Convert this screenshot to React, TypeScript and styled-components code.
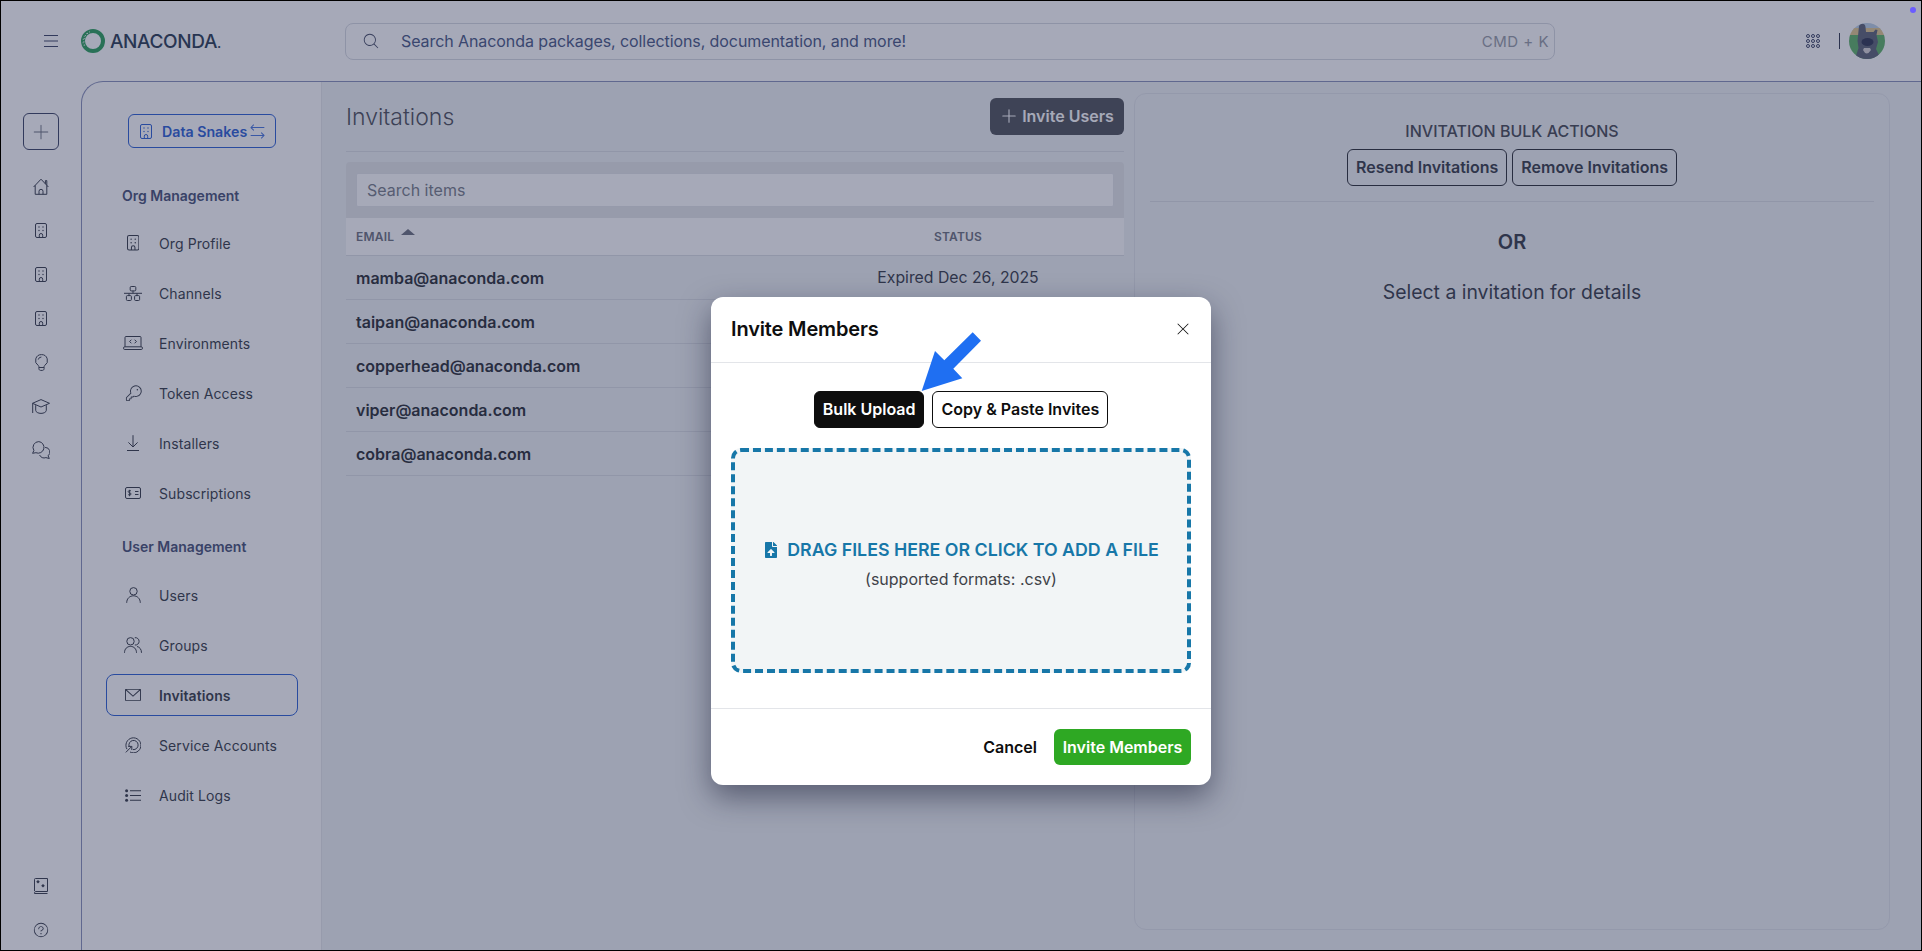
import styled, { createGlobalStyle } from "styled-components";
import { FaFileUpload } from "react-icons/fa";
import {
  PiArrowsLeftRightLight,
  PiEnvelopeSimpleLight,
  PiKeyLight,
  PiMagnifyingGlassLight,
  PiPlus,
  PiPlusLight,
  PiQuestionLight,
  PiXLight,
} from "react-icons/pi";

const Building = ({ size = 16 }: { size?: number }) => (
  <svg width={size * 0.8} height={size} viewBox="0 0 12 15" fill="none" stroke="currentColor" strokeWidth="1">
    <rect x="0.5" y="0.5" width="11" height="14" rx="1.5" />
    <path d="M4.3 14.5v-2.3a1.7 1.7 0 0 1 3.4 0v2.3" />
    <g fill="currentColor" stroke="none">
      <circle cx="4" cy="4" r=".7" />
      <circle cx="8" cy="4" r=".7" />
      <circle cx="4" cy="7.5" r=".7" />
      <circle cx="8" cy="7.5" r=".7" />
    </g>
  </svg>
);

const Home = () => (
  <svg width="16" height="17" viewBox="0 0 16 17" fill="none" stroke="currentColor" strokeWidth="1">
    <path d="M.6 9 8 1.2 15.4 9M2.2 7.4v8.9h11.6V7.4M6 16.300v-3a2 2 0 0 1 4 0v3M12.400 5.800V2.600h1.400v4.600" />
  </svg>
);

const Bulb = () => (
  <svg width="13" height="17" viewBox="0 0 13 17" fill="none" stroke="currentColor" strokeWidth="1">
    <path d="M6.500.6a5.900 5.900 0 0 0-3.200 10.900c.4.300.6.700.6 1.100v.9h5.200v-.9c0-.4.2-.8.6-1.100A5.900 5.900 0 0 0 6.500.6z" />
    <path d="M3.900 13.500v1.200c0 .9.700 1.700 1.700 1.700h1.800c1 0 1.700-.8 1.700-1.700v-1.200M6.400 3a3.400 3.400 0 0 0-3.200 2.600" />
  </svg>
);

const GradCap = () => (
  <svg width="18" height="15" viewBox="0 0 18 15" fill="none" stroke="currentColor" strokeWidth="1">
    <path d="M.5 4.300 9 .6l8.500 3.700L9 8z" />
    <path d="M3.700 6.200v5.200c0 1.600 2.500 3 5.300 3s5.300-1.400 5.300-3V6.200M.7 4.300V14" />
  </svg>
);

const Chats = () => (
  <svg width="18" height="18" viewBox="0 0 18 18" fill="none" stroke="currentColor" strokeWidth="1">
    <path d="M6.800.6a5.800 5.800 0 0 0-4.900 8.900L.6 12.300l3.300-.6A5.800 5.800 0 1 0 6.800.6z" />
    <path d="M13.100 6.400a4.700 4.700 0 0 1 3 8.400l1.200 2.700-3.400-.9a4.800 4.800 0 0 1-6.300-2.600" />
  </svg>
);

const Channels = () => (
  <svg width="18" height="15" viewBox="0 0 18 15" fill="none" stroke="currentColor" strokeWidth="1">
    <rect x="6.200" y=".5" width="5.600" height="4.400" rx="1" />
    <path d="M0 7.300h18M9 4.900v2.400M5 7.300v2.300M13 7.300v2.300" />
    <rect x="2.400" y="9.600" width="5" height="4.900" rx="1" />
    <rect x="10.600" y="9.600" width="5" height="4.900" rx="1" />
  </svg>
);

const Laptop = () => (
  <svg width="20" height="14" viewBox="0 0 20 14" fill="none" stroke="currentColor" strokeWidth="1">
    <path d="M2 10.800V1.500a1 1 0 0 1 1-1h14a1 1 0 0 1 1 1v9.300" />
    <rect x=".5" y="10.800" width="19" height="2.700" rx="1.300" />
    <path d="M8.400 3.700 6.600 5.500l1.800 1.800M11.600 3.700l1.800 1.800-1.800 1.800" />
  </svg>
);

const DownloadLine = () => (
  <svg width="12" height="16" viewBox="0 0 12 16" fill="none" stroke="currentColor" strokeWidth="1">
    <path d="M6 .2v11.600M1.400 7.400 6 12l4.600-4.600M0 15.500h12" />
  </svg>
);

const Bill = () => (
  <svg width="16" height="12" viewBox="0 0 16 12" fill="none" stroke="currentColor" strokeWidth="1">
    <rect x=".5" y=".5" width="15" height="11" rx="1.500" />
    <path d="M10 4.500h3.500M10 7.500h3.500M6 4c-.3-.6-2.800-.8-2.800.6 0 1.500 2.900.9 2.900 2.400 0 1.300-2.600 1.200-3 .4M4.600 2.800v6.400" />
  </svg>
);

const Person = () => (
  <svg width="15" height="16" viewBox="0 0 15 16" fill="none" stroke="currentColor" strokeWidth="1">
    <circle cx="7.500" cy="4.300" r="3.700" />
    <path d="M.7 15.800c0-4.200 3-7 6.800-7s6.800 2.800 6.800 7" />
  </svg>
);

const People = () => (
  <svg width="18" height="16" viewBox="0 0 18 16" fill="none" stroke="currentColor" strokeWidth="1">
    <circle cx="6.500" cy="4.300" r="3.700" />
    <path d="M10.800.7a3.700 3.700 0 1 1 0 7.300M.5 15.800c0-3.900 2.500-6.400 6-6.400s6 2.500 6 6.400M13 9.500c2.700.5 4.500 2.900 4.500 6.300" />
  </svg>
);

const ServiceMark = () => (
  <svg width="16" height="16" viewBox="0 0 16 16" fill="none" stroke="currentColor" strokeWidth="1">
    <path d="M2 12.200A7.500 7.500 0 1 1 5 15" />
    <path d="M4.200 9.600A4.600 4.600 0 1 1 8 12.600" />
    <path d="M.8 15.400 6.600 9.600M6.800 13V9.400H3.200" />
  </svg>
);

const AuditList = () => (
  <svg width="16" height="13" viewBox="0 0 16 13" fill="none" stroke="currentColor" strokeWidth="1.100">
    <path d="M5 1.700h11M5 6.500h11M5 11.300h11" />
    <g fill="currentColor" stroke="none">
      <circle cx="1.600" cy="1.700" r="1.500" />
      <circle cx="1.600" cy="6.500" r="1.500" />
      <circle cx="1.600" cy="11.300" r="1.500" />
    </g>
  </svg>
);

const GuideBook = () => (
  <svg width="14" height="16" viewBox="0 0 14 16" fill="none" stroke="currentColor" strokeWidth="1">
    <path d="M.5 13V1.500a1 1 0 0 1 1-1h12v13H1.800a1.300 1.300 0 0 0-1.300 1.200v.8h13" />
    <path fill="currentColor" stroke="none" d="m4 2 1.800 1.800L4 5.600 2.200 3.800zM9 6l1.800 1.800L9 9.600 7.200 7.800z" />
  </svg>
);

const AppGrid = () => (
  <svg width="14" height="14" viewBox="0 0 14 14" fill="none" stroke="currentColor" strokeWidth="1">
    {[2, 7, 12].map((y) =>
      [2, 7, 12].map((x) => <circle key={`${x}-${y}`} cx={x} cy={y} r="1.500" />)
    )}
  </svg>
);

const LogoRing = () => (
  <svg width="24" height="24" viewBox="0 0 24 24" fill="none">
    <circle cx="12" cy="12" r="10" stroke="#2fa25e" strokeWidth="4" />
    <path d="M7 4C2.500 7 2 13 4 17.500" stroke="#fff" strokeWidth="1" strokeDasharray="1.200 2" />
    <path d="M9 2.800C3.500 4 .5 11 2.800 17" stroke="#fff" strokeWidth=".8" strokeDasharray="1 2.400" />
  </svg>
);

const DogAvatar = () => (
  <svg width="36" height="36" viewBox="0 0 36 36">
    <defs>
      <clipPath id="avatarClip">
        <circle cx="18" cy="18" r="18" />
      </clipPath>
    </defs>
    <g clipPath="url(#avatarClip)">
      <rect width="36" height="8" fill="#bcd2e6" />
      <rect y="5" width="36" height="8" fill="#e2c98f" />
      <rect y="12" width="36" height="24" fill="#62b46a" />
      <path d="M10 3c2-3 6-3 6.500 1l.5 5h7.500l2-2.500 2 .5-1 5 1.500 7-2 7 5 10H6l3.500-11-1-7z" fill="#5f6679" />
      <ellipse cx="18.500" cy="19" rx="6" ry="4" fill="#323a55" />
      <path d="M14 27q3.500 7 8 0l-1-2h-6z" fill="#d9d6d8" />
    </g>
  </svg>
);

const orgItems = [
  { label: "Org Profile", icon: <Building size={15.5} /> },
  { label: "Channels", icon: <Channels /> },
  { label: "Environments", icon: <Laptop /> },
  { label: "Token Access", icon: <PiKeyLight size={19} /> },
  { label: "Installers", icon: <DownloadLine /> },
  { label: "Subscriptions", icon: <Bill /> },
];

const userItems = [
  { label: "Users", icon: <Person /> },
  { label: "Groups", icon: <People /> },
  { label: "Invitations", icon: <PiEnvelopeSimpleLight size={20} />, active: true },
  { label: "Service Accounts", icon: <ServiceMark /> },
  { label: "Audit Logs", icon: <AuditList /> },
];

// only the first row's status shows, the dialog sits over the others
const rows = [
  { email: "mamba@anaconda.com", status: "Expired Dec 26, 2025" },
  { email: "taipan@anaconda.com", status: "" },
  { email: "copperhead@anaconda.com", status: "" },
  { email: "viper@anaconda.com", status: "" },
  { email: "cobra@anaconda.com", status: "" },
];

function App() {
  return (
    <Page>
      <GlobalStyle />
      <TopBar>
        <Burger>
          <svg width="14" height="12" viewBox="0 0 14 12" stroke="currentColor" strokeWidth="1">
            <path d="M0 .5h14M0 6h14M0 11.500h14" />
          </svg>
        </Burger>
        <Logo>
          <LogoRing />
          <LogoText>ANACONDA<small>.</small></LogoText>
        </Logo>
        <SearchBar>
          <PiMagnifyingGlassLight size={18} />
          <SearchText>Search Anaconda packages, collections, documentation, and more!</SearchText>
          <Shortcut>CMD + K</Shortcut>
        </SearchBar>
        <UserTools>
          <AppGrid />
          <ToolDivider />
          <DogAvatar />
        </UserTools>
      </TopBar>

      <Body>
        <Rail>
          <AddButton>
            <PiPlusLight size={20} />
          </AddButton>
          <RailStack>
            <RailIcon><Home /></RailIcon>
            <RailIcon><Building size={15} /></RailIcon>
            <RailIcon><Building size={15} /></RailIcon>
            <RailIcon><Building size={15} /></RailIcon>
            <RailIcon><Bulb /></RailIcon>
            <RailIcon><GradCap /></RailIcon>
            <RailIcon><Chats /></RailIcon>
          </RailStack>
          <RailFooter>
            <RailIcon><GuideBook /></RailIcon>
            <RailIcon><PiQuestionLight size={18} /></RailIcon>
          </RailFooter>
        </Rail>

        <Panel>
          <Sidebar>
            <OrgSwitch>
              <Building size={15} />
              <span>Data Snakes</span>
              <PiArrowsLeftRightLight size={21} />
            </OrgSwitch>
            <SectionLabel>Org Management</SectionLabel>
            <NavList>
              {orgItems.map((item) => (
                <NavItem key={item.label}>
                  <NavIcon>{item.icon}</NavIcon>
                  {item.label}
                </NavItem>
              ))}
            </NavList>
            <SectionLabel $spaced>User Management</SectionLabel>
            <NavList>
              {userItems.map((item) => (
                <NavItem key={item.label} $active={item.active}>
                  <NavIcon>{item.icon}</NavIcon>
                  {item.label}
                </NavItem>
              ))}
            </NavList>
          </Sidebar>

          <Content>
            <ListColumn>
              <ListHeader>
                <PageTitle>Invitations</PageTitle>
                <InviteUsers>
                  <PiPlus size={18} />
                  Invite Users
                </InviteUsers>
              </ListHeader>
              <SearchStrip>
                <ItemsSearch>Search items</ItemsSearch>
              </SearchStrip>
              <TableHead>
                <HeadCell>
                  EMAIL <SortArrow />
                </HeadCell>
                <HeadCell $center>STATUS</HeadCell>
              </TableHead>
              {rows.map((row) => (
                <TableRow key={row.email}>
                  <EmailCell>{row.email}</EmailCell>
                  <StatusCell>{row.status}</StatusCell>
                </TableRow>
              ))}
            </ListColumn>

            <DetailPanel>
              <BulkTitle>INVITATION BULK ACTIONS</BulkTitle>
              <BulkButtons>
                <OutlineButton>Resend Invitations</OutlineButton>
                <OutlineButton>Remove Invitations</OutlineButton>
              </BulkButtons>
              <DetailDivider />
              <OrText>OR</OrText>
              <SelectHint>Select a invitation for details</SelectHint>
            </DetailPanel>
          </Content>
        </Panel>
      </Body>

      <Backdrop>
        <Modal>
          <ModalHeader>
            <ModalTitle>Invite Members</ModalTitle>
            <PiXLight size={18} />
          </ModalHeader>
          <ModalBody>
            <Tabs>
              <Tab $selected>Bulk Upload</Tab>
              <Tab>Copy &amp; Paste Invites</Tab>
            </Tabs>
            <DropZone>
              <DropTitle>
                <FaFileUpload size={16} />
                DRAG FILES HERE OR CLICK TO ADD A FILE
              </DropTitle>
              <DropHint>(supported formats: .csv)</DropHint>
            </DropZone>
          </ModalBody>
          <ModalFooter>
            <CancelButton>Cancel</CancelButton>
            <SubmitButton>Invite Members</SubmitButton>
          </ModalFooter>
          <CalloutArrow width="61" height="60" viewBox="0 0 61 60">
            <polygon points=".7,59 14,19 23.3,28.3 51.7,.3 60,8.700 32.3,36.700 41.3,46.300" fill="#1f6ff2" />
          </CalloutArrow>
        </Modal>
      </Backdrop>
      <StatusDot />
    </Page>
  );
}

const GlobalStyle = createGlobalStyle`
  html, body {
    margin: 0;
    height: 100%;
    overflow: hidden;
    background: #fff;
  }
  * {
    box-sizing: border-box;
  }
  body {
    font-family: Inter, "Liberation Sans", sans-serif;
    color: #3a3f4a;
  }
`;

const Page = styled.div`
  position: relative;
  height: 100vh;
  display: flex;
  flex-direction: column;
  border: 1px solid #000;
  overflow: hidden;
`;

const TopBar = styled.header`
  height: 80px;
  flex: none;
  display: flex;
  align-items: center;
  padding: 0 36px 0 38px;
  color: #3f4766;
`;

const Burger = styled.div`
  width: 24px;
  display: flex;
  justify-content: center;
`;

const Logo = styled.div`
  width: 264px;
  margin-left: 18px;
  flex: none;
  display: flex;
  align-items: center;
  gap: 5px;
`;

const LogoText = styled.span`
  font-size: 19px;
  font-weight: 500;
  letter-spacing: -0.37px;
  color: #2e3f55;

  small {
    font-size: 14px;
  }
`;

const SearchBar = styled.div`
  width: 1210px;
  height: 37px;
  flex: none;
  display: flex;
  align-items: center;
  padding: 0 5px 0 16px;
  border: 1px solid #d8dbe2;
  border-radius: 8px;
  color: #4a5068;
`;

const SearchText = styled.span`
  margin-left: 21px;
  font-size: 16px;
  letter-spacing: -0.08px;
  color: #4b5a86;
`;

const Shortcut = styled.span`
  margin-left: auto;
  font-size: 15px;
  letter-spacing: 0.5px;
  color: #9a9ea8;
`;

const UserTools = styled.div`
  margin-left: auto;
  display: flex;
  align-items: center;
  color: #3f4766;
`;

const ToolDivider = styled.div`
  width: 1px;
  height: 16px;
  margin: 0 9px 0 19px;
  background: #33394f;
`;

const Body = styled.div`
  flex: 1;
  min-height: 0;
  display: flex;
`;

const Rail = styled.nav`
  width: 80px;
  flex: none;
  display: flex;
  flex-direction: column;
  align-items: center;
  padding: 32px 0 8px;
  color: #3b404e;
`;

const AddButton = styled.div`
  width: 36px;
  height: 37px;
  display: flex;
  align-items: center;
  justify-content: center;
  border: 1px solid #3f4766;
  border-radius: 6px;
  color: #6d7180;
`;

const RailStack = styled.div`
  margin-top: 24px;
  display: flex;
  flex-direction: column;
  gap: 20px;
`;

const RailFooter = styled(RailStack)`
  margin-top: auto;
`;

const RailIcon = styled.div`
  width: 24px;
  height: 24px;
  display: flex;
  align-items: center;
  justify-content: center;
`;

const Panel = styled.main`
  flex: 1;
  min-width: 0;
  display: flex;
  border-top: 1px solid #8b93bb;
  border-left: 1px solid #8b93bb;
  border-top-left-radius: 22px;
  overflow: hidden;
`;

const Sidebar = styled.aside`
  width: 240px;
  flex: none;
  display: flex;
  flex-direction: column;
  padding: 32px 23px 0 24px;
  border-right: 1px solid #e6e8ec;
`;

const OrgSwitch = styled.button`
  align-self: center;
  width: 148px;
  height: 34px;
  display: flex;
  align-items: center;
  padding: 0 0 0 11px;
  border: 1px solid #2f63d6;
  border-radius: 6px;
  background: transparent;
  font: 600 14.2px Inter, sans-serif;
  color: #2f63d6;

  span {
    margin: 0 0 0 10px;
  }

  svg:last-child {
    color: #4a78e0;
  }
`;

const SectionLabel = styled.div<{ $spaced?: boolean }>`
  margin: ${(props) => (props.$spaced ? "23px 0 17px 16px" : "38px 0 16px 16px")};
  font-size: 14px;
  font-weight: 600;
  line-height: 20px;
  color: #4a5478;
`;

const NavList = styled.ul`
  margin: 0;
  padding: 0;
  list-style: none;
  display: flex;
  flex-direction: column;
  gap: 8px;
`;

const NavItem = styled.li<{ $active?: boolean }>`
  height: 42px;
  display: flex;
  align-items: center;
  gap: 14px;
  padding-left: 14px;
  border: 1px solid ${(props) => (props.$active ? "#2f63d6" : "transparent")};
  border-radius: 8px;
  font-size: 14px;
  font-weight: ${(props) => (props.$active ? 600 : 400)};
  letter-spacing: 0.1px;
  color: #3a3f4a;
`;

const NavIcon = styled.span`
  width: 24px;
  display: flex;
  justify-content: center;
`;

const Content = styled.section`
  flex: 1;
  min-width: 0;
  display: flex;
  gap: 10px;
  padding: 11px 31px 20px 24px;
  background: #f0f3f5;
`;

const ListColumn = styled.div`
  width: 778px;
  flex: none;
  padding-top: 5px;
`;

const ListHeader = styled.div`
  height: 54px;
  display: flex;
  align-items: flex-start;
  justify-content: space-between;
  border-bottom: 1px solid #dde0e5;
`;

const PageTitle = styled.h1`
  margin: 0;
  font-size: 23px;
  font-weight: 300;
  line-height: 39px;
  color: #50535c;
`;

const InviteUsers = styled.button`
  height: 37px;
  width: 134px;
  display: flex;
  align-items: center;
  justify-content: center;
  gap: 4px;
  padding: 0 0 1px;
  border: 0;
  border-radius: 6px;
  background: #53555c;
  font: 600 16px Inter, sans-serif;
  color: #fff;
`;

const SearchStrip = styled.div`
  margin-top: 10px;
  padding: 11px 10px;
  background: #e6e8ea;
  border-radius: 4px 4px 0 0;
`;

const ItemsSearch = styled.div`
  height: 34px;
  display: flex;
  align-items: center;
  padding-left: 10px;
  border: 1px solid #e4e6ea;
  border-radius: 2px;
  background: #fff;
  font-size: 16px;
  color: #7b7f8a;
`;

const TableHead = styled.div`
  height: 38px;
  display: grid;
  grid-template-columns: 1fr 332px;
  align-items: center;
  padding-left: 10px;
  background: #fff;
  border-bottom: 1px solid #dde0e5;
`;

const HeadCell = styled.div<{ $center?: boolean }>`
  display: flex;
  align-items: center;
  justify-content: ${(props) => (props.$center ? "center" : "flex-start")};
  gap: 7px;
  font-size: 12px;
  font-weight: 600;
  letter-spacing: 0.2px;
  color: #6f7380;
`;

const SortArrow = styled.span`
  margin-top: -9px;
  border-left: 7px solid transparent;
  border-right: 7px solid transparent;
  border-bottom: 6px solid #6f7380;
`;

const TableRow = styled.div`
  height: 44px;
  display: grid;
  grid-template-columns: 1fr 332px;
  align-items: center;
  padding-left: 10px;
  border-bottom: 1px solid #dde0e5;
`;

const EmailCell = styled.div`
  font-size: 16px;
  font-weight: 600;
  color: #2e3138;
`;

const StatusCell = styled.div`
  text-align: center;
  font-size: 15.8px;
  color: #3a3f4a;
`;

const DetailPanel = styled.div`
  flex: 1;
  display: flex;
  flex-direction: column;
  align-items: center;
  padding: 26px 15px 0;
  border: 1px solid #e2e5ea;
  border-radius: 12px;
`;

const BulkTitle = styled.div`
  font-size: 16px;
  font-weight: 500;
  line-height: 22px;
  color: #4a4d56;
`;

const BulkButtons = styled.div`
  margin-top: 7px;
  display: flex;
  gap: 5px;
`;

const OutlineButton = styled.button`
  height: 37px;
  padding: 0 8px 2px;
  border: 1px solid #2e3138;
  border-radius: 6px;
  background: transparent;
  font: 600 16px Inter, sans-serif;
  color: #3a3f4a;
`;

const DetailDivider = styled.div`
  align-self: stretch;
  height: 1px;
  margin-top: 15px;
  background: #dde0e5;
`;

const OrText = styled.div`
  margin-top: 27px;
  font-size: 20px;
  font-weight: 600;
  line-height: 26px;
  color: #3a3f4a;
`;

const SelectHint = styled.div`
  margin-top: 24px;
  font-size: 19.4px;
  line-height: 26px;
  color: #3a3f4a;
`;

const Backdrop = styled.div`
  position: absolute;
  inset: 0;
  display: flex;
  justify-content: center;
  align-items: flex-start;
  padding-top: 296px;
  background: rgba(32, 40, 77, 0.4);
`;

const Modal = styled.div`
  position: relative;
  width: 500px;
  height: 488px;
  display: flex;
  flex-direction: column;
  border-radius: 12px;
  background: #fff;
  box-shadow: 0 12px 30px rgba(20, 24, 50, 0.5);
  color: #0e0e0e;
`;

const ModalHeader = styled.div`
  height: 66px;
  flex: none;
  display: flex;
  align-items: center;
  justify-content: space-between;
  padding: 0 19px 2px 20px;
  border-bottom: 1px solid #e3e5e9;
`;

const ModalTitle = styled.h2`
  margin: 0;
  font-size: 20px;
  font-weight: 600;
  letter-spacing: -0.15px;
`;

const ModalBody = styled.div`
  flex: 1;
  display: flex;
  flex-direction: column;
  gap: 20px;
  padding: 28px 20px 0;
`;

const Tabs = styled.div`
  display: flex;
  justify-content: center;
  gap: 8px;
`;

const Tab = styled.button<{ $selected?: boolean }>`
  height: 37px;
  padding: 0 8px 2px;
  border: 1px solid #0e0e0e;
  border-radius: 6px;
  background: ${(props) => (props.$selected ? "#0e0e0e" : "#fff")};
  font: 600 16px Inter, sans-serif;
  color: ${(props) => (props.$selected ? "#fff" : "#0e0e0e")};
`;

const DropZone = styled.div`
  height: 225px;
  display: flex;
  flex-direction: column;
  align-items: center;
  justify-content: center;
  gap: 9px;
  padding-top: 7px;
  border: 4px dashed #1777a8;
  border-radius: 10px;
  background: #f2f5f6;
`;

const DropTitle = styled.div`
  display: flex;
  align-items: center;
  gap: 8px;
  font-size: 17.8px;
  font-weight: 600;
  color: #1777a8;
`;

const DropHint = styled.div`
  font-size: 16px;
  color: #3f4248;
`;

const ModalFooter = styled.div`
  height: 77px;
  flex: none;
  display: flex;
  align-items: center;
  justify-content: flex-end;
  gap: 17px;
  padding: 0 20px;
  border-top: 1px solid #e3e5e9;
`;

const CancelButton = styled.button`
  padding: 0;
  border: 0;
  background: none;
  font: 600 16px Inter, sans-serif;
  color: #0e0e0e;
`;

const SubmitButton = styled.button`
  width: 137px;
  height: 36px;
  padding: 0;
  border: 0;
  border-radius: 6px;
  background: #2ea823;
  font: 600 16px Inter, sans-serif;
  color: #fff;
`;

const CalloutArrow = styled.svg`
  position: absolute;
  left: 210px;
  top: 35px;
`;

const StatusDot = styled.span`
  position: absolute;
  top: 6px;
  right: 5px;
  width: 6px;
  height: 6px;
  border-radius: 50%;
  background: #6a5cff;
`;

export default App;
